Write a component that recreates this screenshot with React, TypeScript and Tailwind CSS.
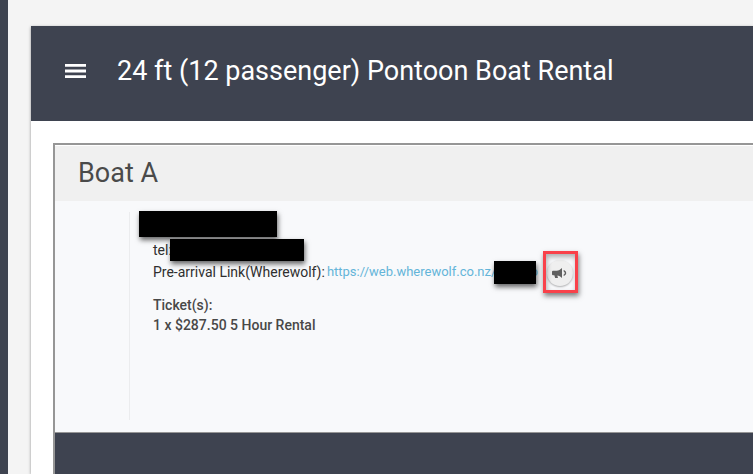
const MenuIcon = () => (
  <svg viewBox="0 0 21 14" className="block h-[14px] w-[21px] fill-white" aria-hidden="true">
    <path d="M0 0h21v2.8H0zM0 5.6h21v2.8H0zM0 11.2h21V14H0z" />
  </svg>
);

const BullhornIcon = () => (
  <svg viewBox="0 0 24 24" className="block size-4 fill-[#606060]" aria-hidden="true">
    <path d="M3 8.500h5.500c3 0 5.500-1.500 8-4v15c-2.200-2.200-4.500-3.500-7-3.900l1 3.900H6.200L5 15.500H3A1.500 1.500 0 0 1 1.500 14v-4A1.500 1.500 0 0 1 3 8.500Z" />
    <path d="M19 7.500c2.500.8 3.800 2.500 3.800 4.500s-1.300 3.700-3.800 4.500v-2.200c1.200-.5 1.700-1.300 1.700-2.300s-.5-1.800-1.700-2.300Z" />
  </svg>
);

const TopBar = ({ title }: { title: string }) => (
  <header className="flex h-[95px] items-center bg-[#3e4350] pr-6 pb-1.5 pl-[34px] text-white">
    <button type="button" aria-label="Open menu" className="mr-[31px]">
      <MenuIcon />
    </button>
    <h1 className="text-[27px] leading-8 whitespace-nowrap">{title}</h1>
  </header>
);

const BookingDetails = () => (
  <div className="h-[231px] bg-[#f8f9fb] pt-[11px] pl-[74px]">
    <div className="h-[208px] border-l border-[#ebecee] pl-[23px] whitespace-nowrap text-[#2f2f2f]">
      <div className="relative h-[27px]">
        <span className="absolute -top-px -left-[14px] h-[26px] w-[138px] bg-black shadow-[1px_3px_5px_rgba(0,0,0,0.6)]" />
      </div>
      <div className="relative h-[22px] leading-[22px]">
        tel:
        <span className="absolute top-0 left-[17px] h-[22px] w-[134px] bg-black shadow-[1px_3px_5px_rgba(0,0,0,0.6)]" />
      </div>
      <div className="flex h-[22px] items-center">
        <span>Pre-arrival Link(Wherewolf):</span>
        <a href="#" className="relative ml-0.5 flex w-[211px] justify-between text-[13px] leading-[22px] text-[#64b5d9]">
          <span>https://web.wherewolf.co.nz/</span>
          <span>o</span>
          <span className="absolute top-0 right-0.5 h-[23px] w-[42px] bg-black shadow-[1px_3px_5px_rgba(0,0,0,0.6)]" />
        </a>
        <div className="relative ml-[9px] size-[26px]">
          <button
            type="button"
            aria-label="Send announcement"
            className="mt-px flex size-[26px] items-center justify-center rounded-full bg-[#efefef] pr-0.5 shadow-[0_1px_2px_rgba(0,0,0,0.3)]"
          >
            <BullhornIcon />
          </button>
          <span className="pointer-events-none absolute -top-2 -left-1 h-[42px] w-[35px] border-3 border-[#f9414a] shadow-[1px_3px_5px_rgba(0,0,0,0.5),inset_1px_3px_5px_rgba(0,0,0,0.3)]" />
        </div>
      </div>
      <div className="pt-3 leading-5 font-medium text-[#484848]">
        <p>Ticket(s):</p>
        <p>1 x $287.50 5 Hour Rental</p>
      </div>
    </div>
  </div>
);

const App = () => {
  return (
    <div className="flex h-screen overflow-hidden bg-[#f4f4f4] font-['Roboto',sans-serif] text-sm">
      <aside className="w-2 shrink-0 bg-[#3e4350]" />
      <main className="min-w-0 flex-1 pt-[26px] pl-[23px]">
        <div className="flex h-full flex-col bg-white shadow-[0_1px_3px_rgba(0,0,0,0.4)]">
          <TopBar title="24 ft (12 passenger) Pontoon Boat Rental" />
          <div className="flex flex-1 flex-col pt-[22px] pl-[22px]">
            <section className="flex flex-1 flex-col border-t-2 border-l-2 border-[#969696]">
              <h2 className="h-14 border-t border-white bg-[#f0f0f0] pl-[23px] text-[27px] leading-[55px] text-[#4a4a4a]">
                Boat A
              </h2>
              <BookingDetails />
              <div className="flex-1 border-t border-[#969696] bg-[#3e4350]" />
            </section>
          </div>
        </div>
      </main>
    </div>
  );
};

export default App;
